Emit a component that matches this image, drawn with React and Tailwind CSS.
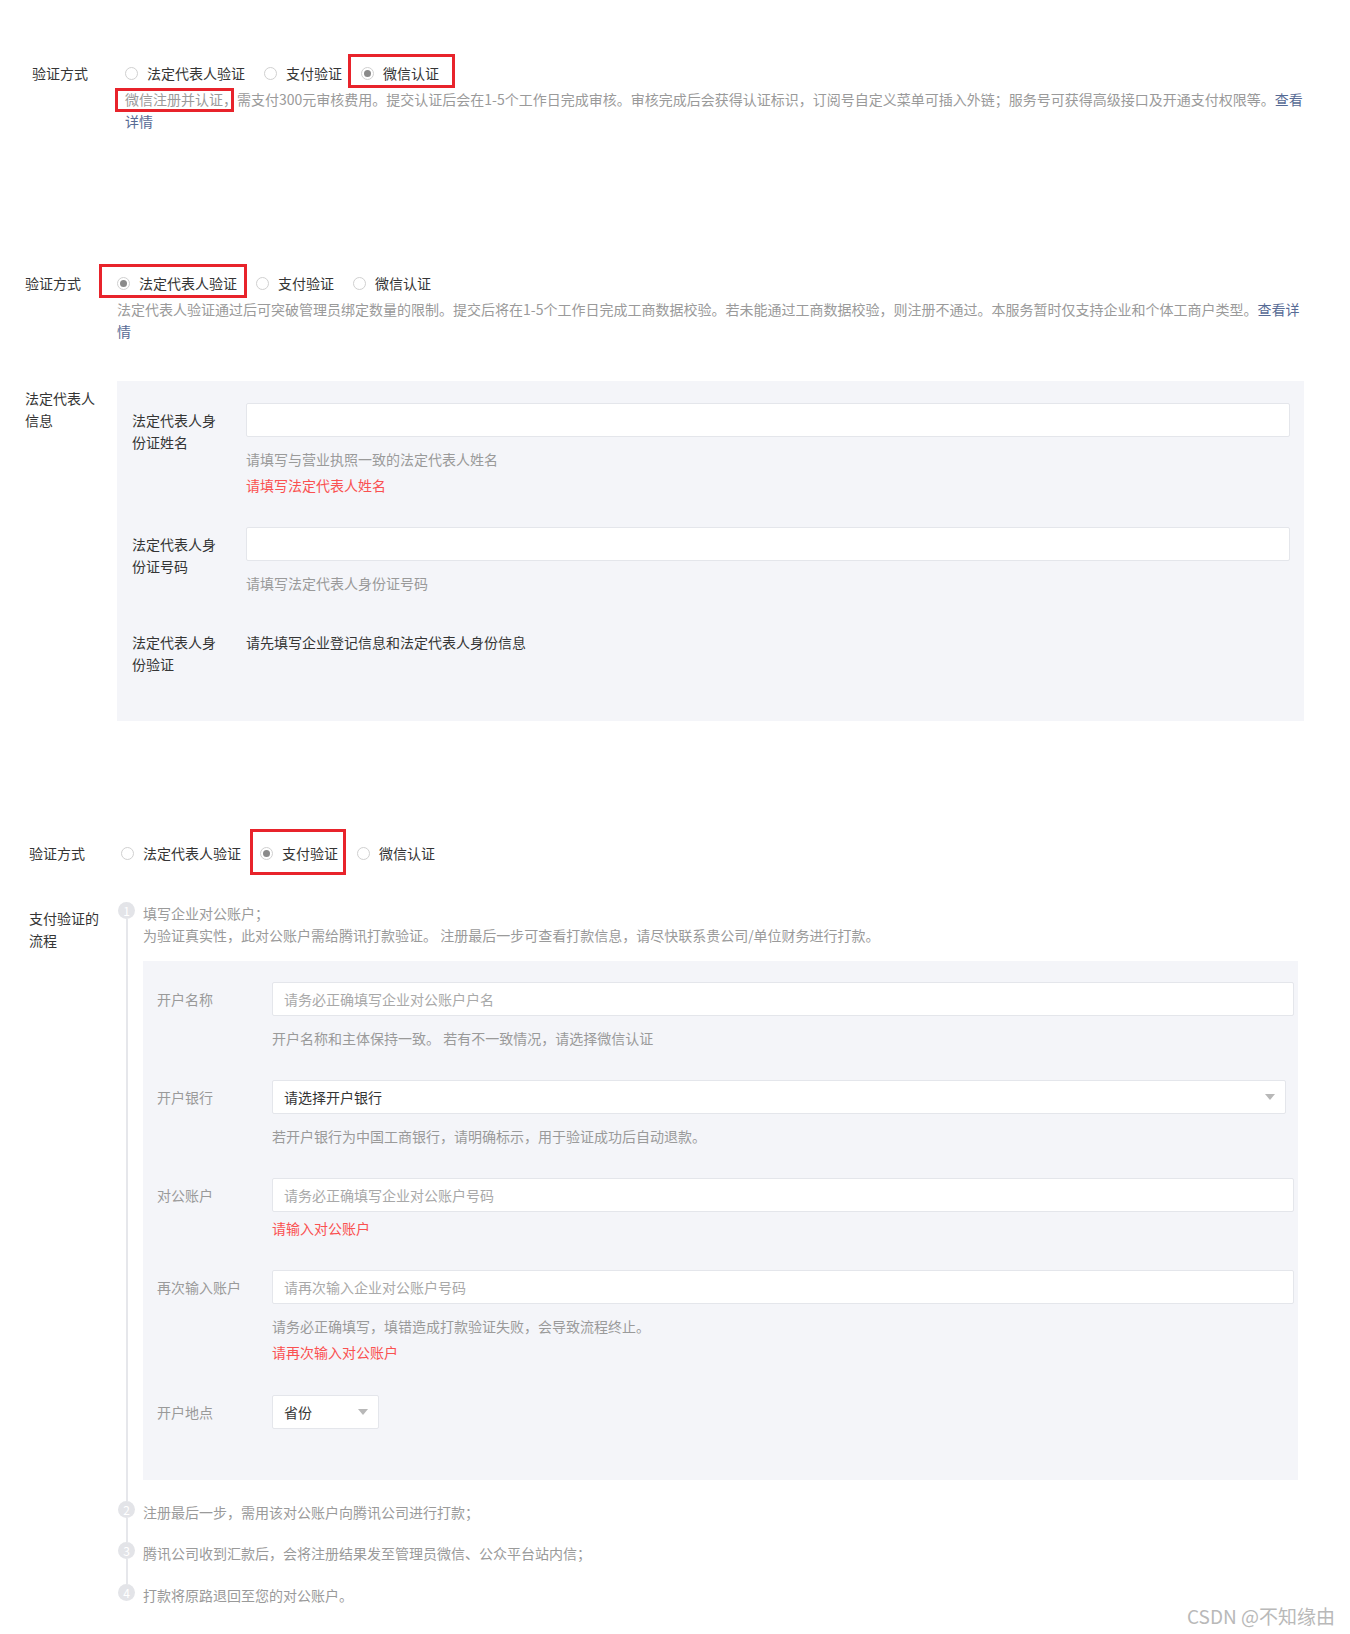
import React from "react";

const FONT = "font-['Noto_Sans_CJK_SC','Noto_Sans',sans-serif]";

function Radio({ label, checked, mark }) {
  return (
    <span className="relative inline-flex items-center">
      <span className="mr-[9px] flex h-[13px] w-[13px] items-center justify-center rounded-full border border-[#d0d0d0] bg-white">
        {checked && <span className="h-[7px] w-[7px] rounded-full bg-[#8a8a8a]" />}
      </span>
      <span>{label}</span>
      {mark && (
        <span className={`pointer-events-none absolute border-[3px] border-[#e8232b] ${mark}`} />
      )}
    </span>
  );
}

function Caret() {
  return (
    <svg width="10" height="6" viewBox="0 0 10 6" className="shrink-0">
      <path d="M0 0h10L5 6z" fill="#b8b8b8" />
    </svg>
  );
}

function Input({ placeholder, className = "" }) {
  return (
    <div
      className={`flex h-[34px] items-center rounded-[2px] border border-[#e4e6eb] bg-white pl-[11px] text-[#a9a9a9] ${className}`}
    >
      {placeholder}
    </div>
  );
}

function Hint({ children, className = "" }) {
  return <div className={`leading-[22px] text-[#9a9a9a] ${className}`}>{children}</div>;
}

function Err({ children, className = "" }) {
  return <div className={`leading-[22px] text-[#fa5151] ${className}`}>{children}</div>;
}

function Step({ n, last, children, className = "" }) {
  return (
    <div className="flex">
      <div className="flex w-[17px] shrink-0 flex-col items-center">
        <span className="flex h-[17px] w-[17px] items-center justify-center rounded-full bg-[#e3e4e8] text-[12px] leading-none text-white">
          {n}
        </span>
        {!last && <span className="w-[2px] flex-1 bg-[#e6e7eb]" />}
      </div>
      <div className={`ml-[8px] flex-1 ${className}`}>{children}</div>
    </div>
  );
}

export default function App() {
  return (
    <div className={`relative h-[1634px] w-[1350px] overflow-hidden bg-white text-[14px] text-[#353535] ${FONT}`}>
      {/* 微信认证 */}
      <div className="flex pl-[32px] pt-[62px]">
        <div className="w-[93px] shrink-0 leading-[22px]">验证方式</div>
        <div>
          <div className="flex gap-[19px] leading-[22px]">
            <Radio label="法定代表人验证" />
            <Radio label="支付验证" />
            <Radio
              label="微信认证"
              checked
              mark="-left-[13px] -right-[16px] -top-[8px] -bottom-[4px]"
            />
          </div>
          <p className="mt-[4px] w-[1184px] leading-[22px] text-[#9a9a9a]">
            <span className="relative">
              微信注册并认证，
              <span className="pointer-events-none absolute -left-[10px] right-[3px] -top-[1px] -bottom-[3px] border-[3px] border-[#e8232b]" />
            </span>
            需支付300元审核费用。提交认证后会在1-5个工作日完成审核。审核完成后会获得认证标识，订阅号自定义菜单可插入外链；服务号可获得高级接口及开通支付权限等。
            <span className="text-[#576b95]">查看详情</span>
          </p>
        </div>
      </div>

      {/* 法定代表人验证 */}
      <div className="mt-[140px] flex pl-[25px]">
        <div className="w-[92px] shrink-0 leading-[22px]">验证方式</div>
        <div>
          <div className="flex gap-[19px] leading-[22px]">
            <Radio
              label="法定代表人验证"
              checked
              mark="-left-[18px] -right-[10px] -top-[8px] -bottom-[4px]"
            />
            <Radio label="支付验证" />
            <Radio label="微信认证" />
          </div>
          <p className="mt-[4px] w-[1188px] leading-[22px] text-[#9a9a9a]">
            法定代表人验证通过后可突破管理员绑定数量的限制。提交后将在1-5个工作日完成工商数据校验。若未能通过工商数据校验，则注册不通过。本服务暂时仅支持企业和个体工商户类型。
            <span className="text-[#576b95]">查看详情</span>
          </p>
        </div>
      </div>

      <div className="mt-[39px] flex pl-[25px]">
        <div className="w-[92px] shrink-0 pt-[6px] leading-[22px]">
          <div className="w-[76px]">法定代表人信息</div>
        </div>
        <div className="w-[1187px] bg-[#f4f5f9] pb-[46px] pl-[15px] pr-[14px] pt-[22px]">
          <div className="flex">
            <div className="w-[114px] shrink-0 pt-[6px] leading-[22px]">
              <div className="w-[88px]">法定代表人身份证姓名</div>
            </div>
            <div className="flex-1">
              <Input />
              <Hint className="mt-[11px]">请填写与营业执照一致的法定代表人姓名</Hint>
              <Err className="mt-[4px]">请填写法定代表人姓名</Err>
            </div>
          </div>
          <div className="mt-[31px] flex">
            <div className="w-[114px] shrink-0 pt-[6px] leading-[22px]">
              <div className="w-[88px]">法定代表人身份证号码</div>
            </div>
            <div className="flex-1">
              <Input />
              <Hint className="mt-[11px]">请填写法定代表人身份证号码</Hint>
            </div>
          </div>
          <div className="mt-[31px] flex">
            <div className="w-[114px] shrink-0 pt-[6px] leading-[22px]">
              <div className="w-[88px]">法定代表人身份验证</div>
            </div>
            <div className="flex-1 pt-[6px] leading-[22px]">请先填写企业登记信息和法定代表人身份信息</div>
          </div>
        </div>
      </div>

      {/* 支付验证 */}
      <div className="mt-[121px] flex pl-[29px]">
        <div className="w-[92px] shrink-0 leading-[22px]">验证方式</div>
        <div className="flex gap-[19px] leading-[22px]">
          <Radio label="法定代表人验证" />
          <Radio
            label="支付验证"
            checked
            mark="-left-[10px] -right-[8px] -top-[13px] -bottom-[11px]"
          />
          <Radio label="微信认证" />
        </div>
      </div>

      <div className="mt-[38px] flex pl-[29px]">
        <div className="w-[89px] shrink-0 pt-[5px] leading-[22px]">
          <div className="w-[76px]">支付验证的流程</div>
        </div>
        <div className="flex-1 leading-[22px] text-[#9a9a9a]">
          <Step n="1" className="pb-[21px]">
            <div>填写企业对公账户；</div>
            <div>为验证真实性，此对公账户需给腾讯打款验证。 注册最后一步可查看打款信息，请尽快联系贵公司/单位财务进行打款。</div>
            <div className="mt-[15px] w-[1155px] bg-[#f4f5f9] pb-[51px] pl-[14px] pr-[4px] pt-[21px]">
              <div className="flex">
                <div className="w-[115px] shrink-0 pt-[6px]">开户名称</div>
                <div className="flex-1">
                  <Input placeholder="请务必正确填写企业对公账户户名" />
                  <Hint className="mt-[11px]">开户名称和主体保持一致。 若有不一致情况，请选择微信认证</Hint>
                </div>
              </div>
              <div className="mt-[31px] flex">
                <div className="w-[115px] shrink-0 pt-[6px]">开户银行</div>
                <div className="flex-1">
                  <div className="mr-[8px] flex h-[34px] items-center justify-between rounded-[2px] border border-[#e4e6eb] bg-white pl-[11px] pr-[10px] text-[#353535]">
                    <span>请选择开户银行</span>
                    <Caret />
                  </div>
                  <Hint className="mt-[11px]">若开户银行为中国工商银行，请明确标示，用于验证成功后自动退款。</Hint>
                </div>
              </div>
              <div className="mt-[31px] flex">
                <div className="w-[115px] shrink-0 pt-[6px]">对公账户</div>
                <div className="flex-1">
                  <Input placeholder="请务必正确填写企业对公账户号码" />
                  <Err className="mt-[5px]">请输入对公账户</Err>
                </div>
              </div>
              <div className="mt-[31px] flex">
                <div className="w-[115px] shrink-0 pt-[6px]">再次输入账户</div>
                <div className="flex-1">
                  <Input placeholder="请再次输入企业对公账户号码" />
                  <Hint className="mt-[11px]">请务必正确填写，填错造成打款验证失败，会导致流程终止。</Hint>
                  <Err className="mt-[4px]">请再次输入对公账户</Err>
                </div>
              </div>
              <div className="mt-[32px] flex">
                <div className="w-[115px] shrink-0 pt-[6px]">开户地点</div>
                <div className="flex-1">
                  <div className="flex h-[34px] w-[107px] items-center justify-between rounded-[2px] border border-[#e4e6eb] bg-white pl-[11px] pr-[10px] text-[#353535]">
                    <span>省份</span>
                    <Caret />
                  </div>
                </div>
              </div>
            </div>
          </Step>
          <Step n="2" className="pb-[19px]">注册最后一步，需用该对公账户向腾讯公司进行打款；</Step>
          <Step n="3" className="pb-[20px]">腾讯公司收到汇款后，会将注册结果发至管理员微信、公众平台站内信；</Step>
          <Step n="4" last>打款将原路退回至您的对公账户。</Step>
        </div>
      </div>

      <div className="absolute bottom-[5px] right-[15px] text-[19px] leading-[26px] text-[#b9b9b9]">
        CSDN @不知缘由
      </div>
    </div>
  );
}
